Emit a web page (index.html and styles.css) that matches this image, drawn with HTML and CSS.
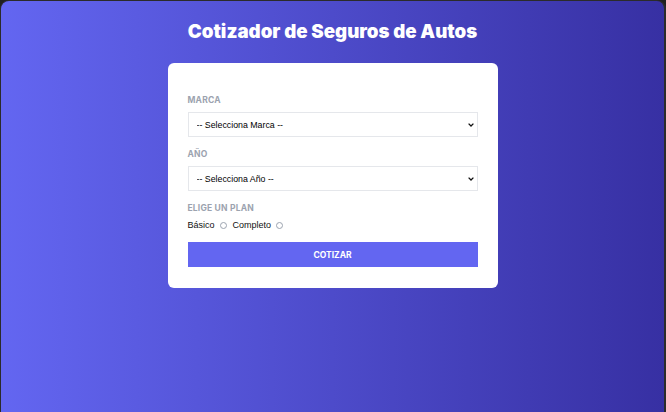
FILE: index.html
```html
<!DOCTYPE html>
<html lang="es">
<head>
<meta charset="utf-8">
<title>Cotizador de Seguros de Autos</title>
<link rel="stylesheet" href="styles.css">
</head>
<body>
  <h1 class="title">Cotizador de Seguros de Autos</h1>
  <form class="card">
    <div class="field">
      <label class="label" for="marca">Marca</label>
      <div class="select-wrap">
        <select id="marca" class="select">
          <option>-- Selecciona Marca --</option>
        </select>
        <svg class="chevron" width="6" height="4" viewBox="0 0 6 4"><path d="M0.6 0.6 L3 3 L5.4 0.6" fill="none" stroke="#111" stroke-width="1.3"/></svg>
      </div>
    </div>
    <div class="field">
      <label class="label" for="year">Año</label>
      <div class="select-wrap">
        <select id="year" class="select">
          <option>-- Selecciona Año --</option>
        </select>
        <svg class="chevron" width="6" height="4" viewBox="0 0 6 4"><path d="M0.6 0.6 L3 3 L5.4 0.6" fill="none" stroke="#111" stroke-width="1.3"/></svg>
      </div>
    </div>
    <div class="field">
      <span class="label label-plan">Elige un Plan</span>
      <div class="plans">
        <label class="plan">Básico <input type="radio" name="plan" class="radio"></label>
        <label class="plan">Completo <input type="radio" name="plan" class="radio"></label>
      </div>
    </div>
    <button type="button" class="btn">Cotizar</button>
  </form>
</body>
</html>
```

FILE: styles.css
```css
html {
  background: #202020;
  height: 100%;
}
body {
  margin: 0;
  height: 100%;
  box-sizing: border-box;
  border: 1px solid #2b2b2b;
  border-right-width: 2px;
  border-bottom: 0;
  border-radius: 9px 9px 0 0;
  background: linear-gradient(to right, #6366f1, #3730a3);
  font-family: Inter, "Liberation Sans", sans-serif;
  display: flex;
  flex-direction: column;
  align-items: center;
  padding-top: 19px;
}
.title {
  margin: 0;
  color: #fff;
  font-size: 18.7px;
  line-height: 24px;
  font-weight: 900;
}
.card {
  margin-top: 19px;
  width: 330px;
  box-sizing: border-box;
  background: #fff;
  border-radius: 6px;
  padding: 31px 20px 21px;
  display: flex;
  flex-direction: column;
}
.field {
  display: flex;
  flex-direction: column;
  margin-bottom: 11px;
}
.label {
  color: #9ca3af;
  font-size: 8.5px;
  line-height: 12px;
  font-weight: 700;
  text-transform: uppercase;
  margin-bottom: 6px;
  letter-spacing: 0.2px;
}
.label-plan {
  margin-bottom: 5px;
}
.select-wrap {
  position: relative;
}
.select {
  display: block;
  appearance: none;
  -webkit-appearance: none;
  height: 25px;
  width: 100%;
  border: 1px solid #e5e7eb;
  border-radius: 0;
  background: #fff;
  font-family: "Liberation Sans", Arial, sans-serif;
  font-size: 8.8px;
  color: #000;
  padding: 0 8px;
  outline: none;
}
.chevron {
  position: absolute;
  right: 4px;
  top: 11px;
}
.plans {
  display: flex;
  gap: 6px;
  align-items: center;
  height: 12px;
}
.plan {
  display: flex;
  align-items: center;
  gap: 4px;
  font-family: "Liberation Sans", Arial, sans-serif;
  font-size: 9px;
  color: #111;
}
.radio {
  appearance: none;
  -webkit-appearance: none;
  width: 7px;
  height: 7px;
  margin: 0 0 0 1px;
  border: 1px solid #9ca3af;
  border-radius: 50%;
  background: #fff;
}
.btn {
  height: 25px;
  width: 100%;
  border: 0;
  background: #6366f1;
  color: #fff;
  font-family: Inter, "Liberation Sans", sans-serif;
  font-size: 8.5px;
  font-weight: 700;
  text-transform: uppercase;
  cursor: pointer;
}
```
